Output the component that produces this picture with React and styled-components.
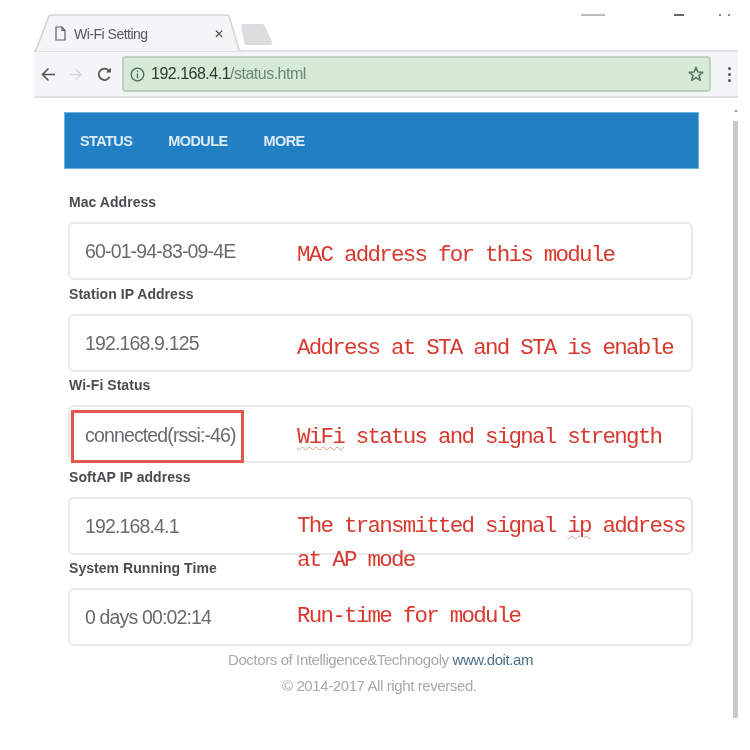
import React from "react";
import styled, { createGlobalStyle } from "styled-components";

const GlobalStyle = createGlobalStyle`
  html, body {
    margin: 0;
    padding: 0;
    background: #fff;
  }
  body {
    width: 750px;
    height: 750px;
    overflow: hidden;
    font-family: "Liberation Sans", Arial, sans-serif;
  }
`;

const Shot = styled.div`
  width: 750px;
  height: 750px;
  padding-top: 14px;
  box-sizing: border-box;
  filter: blur(0.45px);
`;

const Browser = styled.div`
  margin-left: 34px;
  width: 704px;
`;

const TabStrip = styled.div`
  height: 38px;
  display: flex;
  align-items: flex-end;
  border-bottom: 2px solid #e2e2e4;
  box-sizing: border-box;
`;

const TabBody = styled.div`
  position: relative;
  width: 207px;
  height: 38px;
  margin-bottom: -2px;
  flex: none;
`;

const TabShape = styled.svg`
  position: absolute;
  inset: 0;
  display: block;
`;

const TabContent = styled.div`
  position: absolute;
  inset: 0;
  display: flex;
  align-items: center;
  padding: 1px 0 0 21px;
  gap: 8px;
  font-size: 14px;
  letter-spacing: -0.5px;
  color: #58585a;
`;

const TabTitle = styled.span`
  width: 132px;
`;

const TabClose = styled.span`
  font-size: 12px;
  color: #4a4a4a;
`;

const NewTab = styled.svg`
  display: block;
  flex: none;
  margin: 0 0 4px -1px;
`;

const Toolbar = styled.div`
  height: 46px;
  background: #f5f5f7;
  border-bottom: 2px solid #dfdfe1;
  box-sizing: border-box;
  display: flex;
  align-items: center;
  padding-left: 7px;
`;

const NavIcons = styled.div`
  display: flex;
  align-items: center;
  gap: 13px;
  width: 81px;
  flex: none;
`;

const Omnibox = styled.div`
  width: 589px;
  height: 36px;
  box-sizing: border-box;
  background: #d6ead6;
  border: 2px solid #c0d0c0;
  border-radius: 4px;
  display: flex;
  align-items: center;
  padding: 0 5px 0 6px;
  font-size: 16px;
  letter-spacing: -0.5px;
`;

const Host = styled.span`
  color: #2b3a33;
  margin-left: 6px;
`;

const UrlPath = styled.span`
  color: #6f8577;
  flex: 1;
`;

const MenuDots = styled.div`
  display: flex;
  flex-direction: column;
  gap: 3px;
  margin-left: 17px;
`;

const Dot = styled.span`
  width: 3px;
  height: 3px;
  border-radius: 50%;
  background: #555;
`;

const WindowMark = styled.span`
  position: absolute;
  top: 14px;
  left: ${(p) => p.$left}px;
  width: ${(p) => p.$width}px;
  height: 2px;
  background: ${(p) => p.$color};
`;

const ScrollArrow = styled.span`
  position: absolute;
  top: 109px;
  left: 734px;
  border-left: 2px solid transparent;
  border-right: 2px solid transparent;
  border-bottom: 3px solid #a8a8aa;
`;

const ScrollTrack = styled.div`
  position: absolute;
  top: 121px;
  left: 733px;
  width: 5px;
  height: 597px;
  background: #c9c8cc;
`;

const Page = styled.main`
  width: 635px;
  margin: 14px 0 0 64px;
`;

const NavBar = styled.nav`
  height: 57px;
  box-sizing: border-box;
  background: #2180c4;
  border: 1px solid #6db3e0;
  display: flex;
  align-items: center;
  gap: 36px;
  padding-left: 15px;
  font-size: 14.5px;
  font-weight: 700;
  letter-spacing: -0.6px;
  color: #dcebf5;
`;

const Fields = styled.div`
  padding: 23px 6px 0 4px;
`;

const FieldGroup = styled.section`
  margin-bottom: ${(p) => p.$gap}px;
`;

const Label = styled.div`
  height: 20px;
  line-height: 20px;
  padding-left: 1px;
  font-size: 14px;
  font-weight: 700;
  letter-spacing: 0.05px;
  color: #4c4c50;
  margin-bottom: 10px;
`;

const Card = styled.div`
  height: 58px;
  box-sizing: border-box;
  border: 2px solid #e9e9eb;
  border-radius: 6px;
  display: flex;
  align-items: flex-start;
  background: #fff;
`;

const Value = styled.div`
  flex: none;
  width: 227px;
  height: 54px;
  line-height: 55px;
  box-sizing: border-box;
  padding-left: 15px;
  font-size: 19.5px;
  letter-spacing: -0.85px;
  color: #6a6a6e;
`;

const FlaggedValue = styled.span`
  display: block;
  position: relative;
  width: 173px;
  height: 53px;
  margin: 3px 0 0 -14px;
  box-sizing: border-box;
  border: 3px solid #e2574c;
  padding-left: 11px;
  line-height: 44px;
`;

const Note = styled.div`
  padding-top: ${(p) => p.$top}px;
  font-family: "Liberation Mono", "DejaVu Sans Mono", monospace;
  font-size: 22.5px;
  line-height: 34px;
  letter-spacing: -1.75px;
  color: #d8392f;
  white-space: nowrap;
`;

const Typo = styled.span`
  text-decoration: underline wavy #c9a08a 1px;
  text-underline-offset: 3px;
`;

const Footer = styled.footer`
  padding-top: 1px;
  font-size: 15px;
  line-height: 26px;
  letter-spacing: -0.4px;
  color: #a9a9ad;
`;

const FooterLine = styled.div`
  padding-left: ${(p) => p.$indent}px;
`;

const SiteLink = styled.a`
  color: #4c6f88;
`;

const fields = [
  { label: "Mac Address", value: "60-01-94-83-09-4E", top: 14, note: "MAC address for this module" },
  { label: "Station IP Address", value: "192.168.9.125", top: 15, note: "Address at STA and STA is enable" },
  { label: "Wi-Fi Status", value: "connected(rssi:-46)", flagged: true, top: 13, note: <><Typo>WiFi</Typo> status and signal strength</> },
  { label: "SoftAP IP address", value: "192.168.4.1", top: 10, note: <>The transmitted signal <Typo>ip</Typo> address<br />at AP mode</> },
  { label: "System Running Time", value: "0 days 00:02:14", top: 9, note: "Run-time for module" },
];

const TabOutline = () => (
  <TabShape width="207" height="38" viewBox="0 0 207 38">
    <path d="M0 37 L2 36 L15 2 Q16 1 18 1 L192 1 Q194 1 195 2 L205 36 L207 37 Z" fill="#f5f5f7" />
    <path d="M0 37 L2 36 L15 2 Q16 1 18 1 L192 1 Q194 1 195 2 L205 36 L207 37" fill="none" stroke="#d4d4d6" strokeWidth="1.6" />
  </TabShape>
);

const PageIcon = () => (
  <svg width="11" height="15" viewBox="0 0 11 15" fill="none" stroke="#5c5c5e" strokeWidth="1.2">
    <path d="M1 1 H7 L10 4.5 V14 H1 Z" />
    <path d="M7 1 V4.5 H10" />
  </svg>
);

const BackIcon = ({ color }) => (
  <svg width="15" height="15" viewBox="0 0 15 15" fill="none" stroke={color} strokeWidth="1.6">
    <path d="M14 7.5 H1.5 M7.5 1.5 L1.5 7.5 L7.5 13.5" />
  </svg>
);

const ForwardIcon = ({ color }) => (
  <svg width="15" height="15" viewBox="0 0 15 15" fill="none" stroke={color} strokeWidth="1.4">
    <path d="M1 7.5 H12 M7 2.5 L12 7.5 L7 12.5" />
  </svg>
);

const ReloadIcon = () => (
  <svg width="15" height="15" viewBox="0 0 15 15" fill="none" stroke="#555" strokeWidth="1.8">
    <path d="M12.6 9.8 A5.7 5.7 0 1 1 11.8 3.6" />
    <path d="M9 5.6 H14 V0.8 Z" fill="#555" stroke="none" />
  </svg>
);

const InfoIcon = () => (
  <svg width="15" height="15" viewBox="0 0 15 15" fill="none" stroke="#4f6358" strokeWidth="1.3">
    <circle cx="7.5" cy="7.5" r="6.3" />
    <path d="M7.5 6.5 V11.2 M7.5 3.8 V5.2" />
  </svg>
);

const StarIcon = () => (
  <svg width="16" height="16" viewBox="0 0 16 16" fill="none" stroke="#5b7560" strokeWidth="1.6" strokeLinejoin="round">
    <path d="M8 1.4 L9.9 6 L14.8 6.3 L11 9.4 L12.2 14.3 L8 11.6 L3.8 14.3 L5 9.4 L1.2 6.3 L6.1 6 Z" />
  </svg>
);

const NewTabIcon = () => (
  <NewTab width="33" height="23" viewBox="0 0 33 23">
    <path d="M3 1 H22 Q24 1 25 3 L32 19 Q33 22 30 22 H7 Q5 22 4.500 20 L1 3 Q1 1 3 1 Z" fill="#dcdcde" />
  </NewTab>
);

const App = () => (
  <>
    <GlobalStyle />
    <Shot>
      <WindowMark $left={581} $width={24} $color="#bdbdbf" />
      <WindowMark $left={674} $width={10} $color="#6a6a6c" />
      <WindowMark $left={719} $width={2} $color="#8a8a8c" />
      <WindowMark $left={728} $width={2} $color="#8a8a8c" />
      <ScrollArrow />
      <ScrollTrack />
      <Browser>
        <TabStrip>
          <TabBody>
            <TabOutline />
            <TabContent>
              <PageIcon />
              <TabTitle>Wi-Fi Setting</TabTitle>
              <TabClose>✕</TabClose>
            </TabContent>
          </TabBody>
          <NewTabIcon />
        </TabStrip>
        <Toolbar>
          <NavIcons>
            <BackIcon color="#555" />
            <ForwardIcon color="#d5d5d7" />
            <ReloadIcon />
          </NavIcons>
          <Omnibox>
            <InfoIcon />
            <Host>192.168.4.1</Host>
            <UrlPath>/status.html</UrlPath>
            <StarIcon />
          </Omnibox>
          <MenuDots>
            <Dot />
            <Dot />
            <Dot />
          </MenuDots>
        </Toolbar>
      </Browser>
      <Page>
        <NavBar>
          <span>STATUS</span>
          <span>MODULE</span>
          <span>MORE</span>
        </NavBar>
        <Fields>
          {fields.map((f, i) => (
            <FieldGroup key={f.label} $gap={i === fields.length - 1 ? 0 : 3.5}>
              <Label>{f.label}</Label>
              <Card>
                <Value>
                  {f.flagged ? <FlaggedValue>{f.value}</FlaggedValue> : f.value}
                </Value>
                <Note $top={f.top}>{f.note}</Note>
              </Card>
            </FieldGroup>
          ))}
        </Fields>
        <Footer>
          <FooterLine $indent={164}>
            Doctors of Intelligence&amp;Technogoly <SiteLink>www.doit.am</SiteLink>
          </FooterLine>
          <FooterLine $indent={218}>© 2014-2017 All right reversed.</FooterLine>
        </Footer>
      </Page>
    </Shot>
  </>
);

export default App;
